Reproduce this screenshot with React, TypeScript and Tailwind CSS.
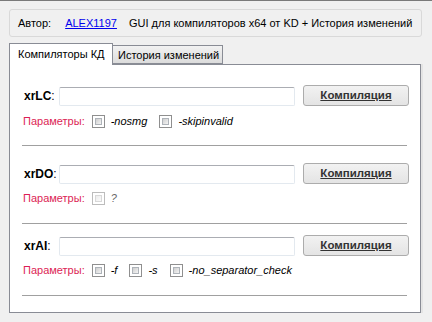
import React from "react";

const font = { fontFamily: '"Liberation Sans", Arial, sans-serif' };

function Check({ disabled = false }: { disabled?: boolean }) {
  return (
    <div
      className={
        "w-[13px] h-[13px] border p-[2px] bg-white shrink-0 " +
        (disabled ? "border-[#bcbcbc]" : "border-[#8f8f8f]")
      }
    >
      <div
        className={
          "w-full h-full border " +
          (disabled
            ? "border-[#d8d8d8] bg-gradient-to-br from-[#ececec] to-[#fafafa]"
            : "border-[#aeb3b9] bg-gradient-to-br from-[#cfcfcf] to-[#f4f4f4]")
        }
      />
    </div>
  );
}

function Label({ children, gray = false }: { children: React.ReactNode; gray?: boolean }) {
  return (
    <span className={"ml-[6px] text-[11px] italic leading-none " + (gray ? "text-[#6b6b6b]" : "text-black")}>
      {children}
    </span>
  );
}

function Row({ name }: { name: string }) {
  return (
    <div className="flex items-start h-[21px]">
      <div className="w-[49px] shrink-0 pl-[14px] mt-[4px] text-[12px] leading-[14px] text-black whitespace-nowrap">
        <span className="font-bold">{name}</span>:
      </div>
      <div className="mt-[2px] w-[236px] h-[19px] shrink-0 border border-[#e3e9ef] border-t-[#abadb3] rounded-[2px] bg-white" />
      <button className="ml-[8px] w-[106px] h-[21px] shrink-0 rounded-[3px] border border-[#acacac] bg-gradient-to-b from-[#f2f2f2] to-[#e4e4e4] text-[11.5px] font-bold underline text-[#333] leading-none">
        Компиляция
      </button>
    </div>
  );
}

function Params({ children }: { children: React.ReactNode }) {
  return (
    <div className="flex items-center h-[13px] pl-[13px]">
      <span className="text-[11px] text-[#dc1e55] leading-none mr-[7px]">Параметры:</span>
      {children}
    </div>
  );
}

function Sep({ mt }: { mt: string }) {
  return <div className={"ml-[12px] w-[385px] h-px bg-[#a0a0a0] " + mt} />;
}

export default function App() {
  return (
    <div className="w-[432px] h-[322px] bg-[#f0f0f0] border-t border-[#7a7a7a] overflow-hidden" style={font}>
      <div className="mx-[9px] mt-[8px] h-[28px] w-[413px] rounded-[3px] border border-[#d9d9d9] flex items-center pl-[8px] text-[11px] text-black whitespace-nowrap">
        <span>Автор:</span>
        <span className="ml-[14px] text-[#0000ee] underline">ALEX1197</span>
        <span className="ml-[12px]">GUI для компиляторов x64 от KD + История изменений</span>
      </div>
      <div className="mt-[5px] ml-[9px] flex items-end h-[22px]">
        <div className="relative z-10 -mb-px h-[22px] w-[104px] bg-white border border-b-0 border-[#898c95] pl-[8px] pt-[4px] text-[11px] leading-[13px] text-black whitespace-nowrap">
          Компиляторы КД
        </div>
        <div className="h-[19px] w-[110px] border border-l-0 border-[#898c95] bg-gradient-to-b from-[#f2f2f2] to-[#dcdcdc] pl-[5px] pt-[3px] text-[11px] leading-[13px] text-black whitespace-nowrap">
          История изменений
        </div>
      </div>
      <div className="ml-[9px] w-[412px] h-[249px] bg-white border border-[#898c95] shadow-[2px_0_0_#e4e4e4]">
        <div className="mt-[20px]">
          <Row name="xrLC" />
        </div>
        <div className="mt-[9px]">
          <Params>
            <Check />
            <Label>-nosmg</Label>
            <div className="ml-[12px]" />
            <Check />
            <Label>-skipinvalid</Label>
          </Params>
        </div>
        <Sep mt="mt-[17px]" />
        <div className="mt-[17px]">
          <Row name="xrDO" />
        </div>
        <div className="mt-[8px]">
          <Params>
            <Check disabled />
            <Label gray>?</Label>
          </Params>
        </div>
        <Sep mt="mt-[18px]" />
        <div className="mt-[11px]">
          <Row name="xrAI" />
        </div>
        <div className="mt-[8px]">
          <Params>
            <Check />
            <Label>-f</Label>
            <div className="ml-[12px]" />
            <Check />
            <Label>-s</Label>
            <div className="ml-[12px]" />
            <Check />
            <Label>-no_separator_check</Label>
          </Params>
        </div>
        <Sep mt="mt-[18px]" />
      </div>
    </div>
  );
}
